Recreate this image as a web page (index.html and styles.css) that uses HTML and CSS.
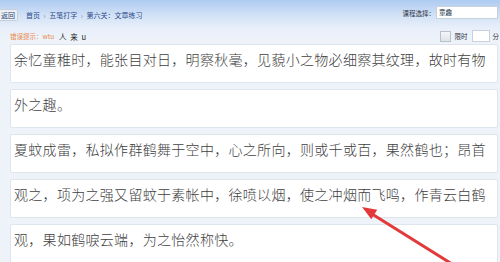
FILE: index.html
```html
<!DOCTYPE html>
<html lang="zh">
<head>
<meta charset="utf-8">
<link rel="stylesheet" href="styles.css">
</head>
<body>
<div class="page">
  <div class="top">
    <span class="back">返回</span>
    <span class="crumbs">首页 <i>›</i> 五笔打字 <i>›</i> 第六关：文章练习</span>
    <span class="spacer"></span>
    <span class="label">课程选择：</span>
    <span class="select">童趣</span>
  </div>
  <div class="sub">
    <span class="err">错误提示：wtu</span>
    <span class="typed">人 来 u</span>
    <span class="spacer"></span>
    <span class="check"></span>
    <span class="label">限时</span>
    <span class="minutes"></span>
    <span class="label unit">分</span>
  </div>
  <div class="lines">
    <div class="line">余忆童稚时，能张目对日，明察秋毫，见藐小之物必细察其纹理，故时有物</div>
    <div class="line">外之趣。</div>
    <div class="line">夏蚊成雷，私拟作群鹤舞于空中，心之所向，则或千或百，果然鹤也；昂首</div>
    <div class="line">观之，项为之强又留蚊于素帐中，徐喷以烟，使之冲烟而飞鸣，作青云白鹤</div>
    <div class="line">观，果如鹤唳云端，为之怡然称快。</div>
  </div>
  <svg class="arrow" width="500" height="262" viewBox="0 0 500 262">
    <line x1="452" y1="264" x2="372" y2="214" stroke="#e23a3a" stroke-width="3" stroke-linecap="round"/>
    <polygon points="362,207 377.2,209.8 371.3,219.2" fill="#e23a3a"/>
  </svg>
</div>
</body>
</html>
```
FILE: styles.css
```css
html, body {
  margin: 0;
  padding: 0;
}
body {
  width: 500px;
  height: 262px;
  overflow: hidden;
  background: #eef3fa;
  font-family: "Noto Sans CJK SC", "Liberation Sans", sans-serif;
}
.page {
  position: relative;
  height: 262px;
  background: linear-gradient(to bottom, #aecbf1 0px, #cfe0f6 14px, #e8effa 28px, #eef3fa 40px);
}
.top {
  height: 26px;
  display: flex;
  align-items: center;
  padding-top: 2px;
}
.back {
  font-size: 7px;
  line-height: 10px;
  color: #2a4a7a;
  background: #eceff3;
  border: 1px solid #c5cfdb;
  border-left: none;
  border-radius: 0 2px 2px 0;
  padding: 0 2px 0 1px;
}
.crumbs {
  margin-left: 8px;
  font-size: 7px;
  color: #2a4a8a;
}
.crumbs i {
  font-style: normal;
  color: #7a8aa8;
  padding: 0 2px;
}
.spacer {
  flex: 1;
}
.label {
  font-size: 6.5px;
  color: #334;
}
.top .label {
  margin-top: -5px;
}
.select {
  margin-top: -5px;
  width: 58px;
  height: 11px;
  margin-left: 1px;
  margin-right: 2px;
  background: #fff;
  border: 1px solid #c8d0da;
  font-size: 6.5px;
  line-height: 11px;
  color: #234;
  padding-left: 2px;
}
.sub {
  height: 16px;
  display: flex;
  align-items: center;
  padding-left: 10px;
}
.err {
  font-size: 6.5px;
  color: #e8894a;
}
.typed {
  margin-left: 5px;
  font-size: 7.5px;
  color: #222;
  letter-spacing: 1px;
}
.check {
  width: 9px;
  height: 9px;
  border: 1px solid #b8c2ce;
  background: linear-gradient(#f4f6f8, #dfe4ea);
  margin-right: 4px;
}
.minutes {
  width: 16px;
  height: 10px;
  background: #fff;
  border: 1px solid #c8d0da;
  margin: 0 3px 0 4px;
}
.unit {
  margin-right: 1px;
}
.lines {
  display: flex;
  flex-direction: column;
  gap: 6px;
  padding-left: 10px;
  padding-right: 2px;
}
.line {
  height: 39px;
  background: #fff;
  border: 1px solid #dfe5ec;
  border-radius: 2px;
  box-sizing: border-box;
  padding: 4px 0 0 3px;
  font-size: 14px;
  line-height: 20px;
  letter-spacing: 0.3px;
  color: #404040;
  font-weight: 300;
  white-space: nowrap;
  overflow: hidden;
}
.arrow {
  position: absolute;
  left: 0;
  top: 0;
  pointer-events: none;
}
```
